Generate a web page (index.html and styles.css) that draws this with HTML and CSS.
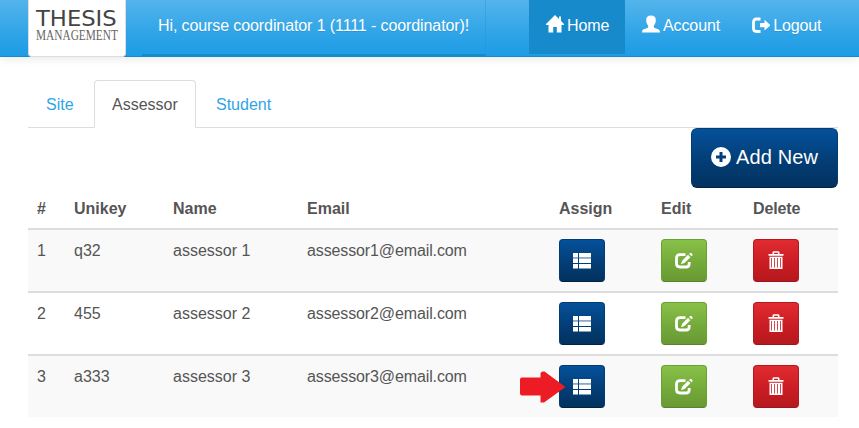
FILE: index.html
```
<!DOCTYPE html>
<html lang="en">
<head>
<meta charset="utf-8">
<title>Thesis Management</title>
<link rel="stylesheet" href="styles.css">
</head>
<body>
<svg class="defs" aria-hidden="true">
  <symbol id="home" viewBox="0 0 18 18"><path d="M9 0 0 9v1h2.500v7.500h4.700v-5.500h3.600v5.500h4.700V10H18V9l-3-3V1.500h-2V4z"/></symbol>
  <symbol id="user" viewBox="0 0 18 18"><path d="M9 0.500c3.300 0 4.800 1.700 4.800 4.500 0 2.800-1 4.600-2 5.800v1.500c0 .8 5.500 1.700 5.900 3.500l.3 1.700H0l.3-1.700c.4-1.800 5.900-2.700 5.900-3.500v-1.500c-1-1.200-2-3-2-5.800 0-2.800 1.500-4.500 4.800-4.500z"/></symbol>
  <symbol id="logout" viewBox="0 0 18 18"><path d="M8.500 3H4.500Q1.500 3 1.500 6v6.500q0 3 3 3h4" fill="none" stroke="currentColor" stroke-width="2.800"/><path d="M8 7h4.500V3.800l6 5.500-6 5.200v-3.200H8z"/></symbol>
  <symbol id="plus" viewBox="0 0 20 20"><path fill-rule="evenodd" d="M10 0a10 10 0 1 0 0 20 10 10 0 0 0 0-20zM8.500 5h3v3.500H15v3h-3.500V15h-3v-3.500H5v-3h3.500z"/></symbol>
  <symbol id="list" viewBox="0 0 18 16"><path d="M0 0h5v4.200H0zM6 0h12v4.200H6zM0 5.500h5v4.500H0zM6 5.500h12v4.500H6zM0 11h5v4.500H0zM6 11h12v4.500H6z"/><path d="M0 4.200h5v1.300H0zM6 4.200h12v1.300H6z" opacity=".55"/></symbol>
  <symbol id="edit" viewBox="0 0 18 16"><path d="M10.500 1.700H5Q1.500 1.700 1.500 5v5.500q0 3.500 3.500 3.500h6q3.200 0 3.200-3.300V9" fill="none" stroke="currentColor" stroke-width="2.800"/><path d="m13 1.800 2.400 2.400-5.900 5.900-3.500 1.200 1.100-3.600zM14.100.9l.9-.9h1.300l1.200 1.200v1.200l-1 .9z"/></symbol>
  <symbol id="trash" viewBox="0 0 16 18"><path d="M4.500 3V1.500Q4.500.2 6 .2h4q1.500 0 1.500 1.300V3h4v1.700H.5V3zM6 3h4V1.800H6z" fill-rule="evenodd"/><path fill-rule="evenodd" d="M1.500 5.700h13V18h-13zM3.200 7v9.500h.8V7zM6.100 7v9.500h.8V7zM9.100 7v9.500h.8V7zM12 7v9.500h.8V7z"/></symbol>
</svg>
<header class="navbar">
  <a class="brand">
    <span class="brand-top">THESIS</span>
    <span class="brand-sub">MANAGEMENT</span>
  </a>
  <div class="greeting">Hi, course coordinator 1 (1111 - coordinator)!</div>
  <nav class="menu">
    <a class="active"><svg><use href="#home"/></svg><span>Home</span></a>
    <a><svg><use href="#user"/></svg><span>Account</span></a>
    <a><svg><use href="#logout"/></svg><span>Logout</span></a>
  </nav>
</header>
<main>
  <ul class="tabs"><li>Site</li><li class="active">Assessor</li><li>Student</li></ul>
  <div class="toolbar"><button class="btn blue add"><svg><use href="#plus"/></svg><span>Add New</span></button></div>
  <table>
    <colgroup><col class="c-num"><col class="c-key"><col class="c-name"><col class="c-email"><col class="c-assign"><col class="c-edit"><col class="c-delete"></colgroup>
    <thead><tr><th>#</th><th>Unikey</th><th>Name</th><th>Email</th><th>Assign</th><th>Edit</th><th>Delete</th></tr></thead>
    <tbody>
      <tr><td>1</td><td>q32</td><td>assessor 1</td><td class="email">assessor1@email.com</td>
        <td><button class="btn blue" aria-label="Assign"><svg class="list"><use href="#list"/></svg></button></td>
        <td><button class="btn green" aria-label="Edit"><svg class="list"><use href="#edit"/></svg></button></td>
        <td><button class="btn red" aria-label="Delete"><svg class="trash"><use href="#trash"/></svg></button></td></tr>
      <tr><td>2</td><td>455</td><td>assessor 2</td><td class="email">assessor2@email.com</td>
        <td><button class="btn blue" aria-label="Assign"><svg class="list"><use href="#list"/></svg></button></td>
        <td><button class="btn green" aria-label="Edit"><svg class="list"><use href="#edit"/></svg></button></td>
        <td><button class="btn red" aria-label="Delete"><svg class="trash"><use href="#trash"/></svg></button></td></tr>
      <tr><td>3</td><td>a333</td><td>assessor 3</td><td class="email">assessor3@email.com</td>
        <td><div class="marked"><button class="btn blue" aria-label="Assign"><svg class="list"><use href="#list"/></svg></button><svg class="arrow" viewBox="0 0 46 32"><path d="M2 6.500h18.500V3q0-2.500 2.500-2.500h1.500L45.500 16 24 31.500h-3.500V24.500H2q-2 0-2-2v-14q0-2 2-2z"/></svg></div></td>
        <td><button class="btn green" aria-label="Edit"><svg class="list"><use href="#edit"/></svg></button></td>
        <td><button class="btn red" aria-label="Delete"><svg class="trash"><use href="#trash"/></svg></button></td></tr>
    </tbody>
  </table>
</main>
</body>
</html>
```
FILE: styles.css
```
* { box-sizing: border-box; }
body { margin: 0; height: 428px; overflow: hidden; background: #fff; color: #555; font: 16px/24px "Liberation Sans", Arial, sans-serif; }
svg { display: block; fill: currentColor; flex: none; }
.defs { position: absolute; width: 0; height: 0; }
.navbar { display: flex; height: 57px; padding-left: 28px; background: linear-gradient(#54b4eb, #2fa4e7 60%, #1d9ce5); border-bottom: 1px solid #178acc; box-shadow: 0 1px 10px rgba(0,0,0,.1); color: #fff; text-shadow: 0 1px 0 rgba(0,0,0,.1); }
.brand { width: 98px; height: 57px; padding: 10px 0 0 7px; background: #fff; border: 1px solid #ddd; border-top: 0; border-radius: 0 0 4px 4px; text-shadow: none; white-space: nowrap; }
.brand-top, .brand-sub { display: block; width: max-content; transform-origin: 0 50%; }
.brand-top { font: 22px/18px "DejaVu Sans", sans-serif; color: #444; transform: scaleX(1.03); }
.brand-sub { font: 14px/16px "Liberation Serif", serif; color: #666; transform: scaleX(.81); }
.greeting { width: 344px; height: 56px; margin-left: 16px; padding: 14px 0 0 16px; border-right: 1px solid rgba(23,138,204,.3); border-bottom: 2px solid #178acc; white-space: nowrap; letter-spacing: -.1px; }
.menu { display: flex; margin-left: 43px; }
.menu a { display: flex; gap: 3px; height: 54px; padding: 14px 16px 0 17px; letter-spacing: -.1px; }
.menu .active { width: 96px; background: #178acc; }
.menu svg { width: 18px; height: 18px; margin-top: 1px; }
.menu a:not(.active) { padding-right: 15px; }
.menu a:last-child svg { margin-top: 2px; }
main { width: 810px; margin: 23px 0 0 28px; }
.tabs { display: flex; height: 48px; margin: 0; padding: 0; list-style: none; border-bottom: 1px solid #ddd; color: #2fa4e7; }
.tabs li { height: 48px; padding: 13px 17px 0 18px; }
.tabs li:first-child { width: 66px; }
.tabs .active { width: 102px; padding-left: 17px; margin-right: 2px; background: #fff; border: 1px solid #ddd; border-bottom-color: #fff; border-radius: 4px 4px 0 0; padding-top: 12px; color: #555; }
.toolbar { display: flex; justify-content: flex-end; height: 60px; }
.btn { display: flex; align-items: center; justify-content: center; width: 46px; height: 43px; margin: 0; padding: 0; border: 1px solid; border-radius: 4px; color: #fff; font: inherit; text-shadow: 0 1px 0 rgba(0,0,0,.1); }
.blue { background: linear-gradient(#04519b, #033c73 60%, #02325f); border-color: #033c73 #033c73 #022241; }
.green { background: linear-gradient(#88c149, #73a839 60%, #699934); border-color: #69a22f #69a22f #59822c; }
.red { background: linear-gradient(#e12b31, #c71c22 60%, #b5191f); border-color: #b5191f #b5191f #9a161a; }
.add { gap: 5px; width: 147px; height: 60px; border-radius: 6px; font-size: 20px; letter-spacing: .15px; }
.add svg { width: 20px; height: 20px; margin-top: -3px; }
.add span { margin-top: -2px; }
.list { width: 18px; height: 16px; }
.trash { width: 16px; height: 18px; margin-top: -2px; }
table { width: 810px; table-layout: fixed; border-collapse: separate; border-spacing: 0; }
th, td { padding: 9px; text-align: left; vertical-align: top; }
th { height: 40px; padding-bottom: 7px; }
th:last-child { letter-spacing: -.15px; }
td { height: 63px; border-top: 2px solid #ddd; }
.email { letter-spacing: -.12px; }
tbody tr:nth-child(odd) { background: #f9f9f9; }
.c-num { width: 37px; }
.c-key { width: 99px; }
.c-name { width: 134px; }
.c-email { width: 252px; }
.c-assign { width: 102px; }
.c-edit { width: 92px; }
.c-delete { width: 94px; }
.marked { position: relative; }
.arrow { position: absolute; left: -39px; top: 6px; width: 46px; height: 32px; color: #ed1c24; }
```
